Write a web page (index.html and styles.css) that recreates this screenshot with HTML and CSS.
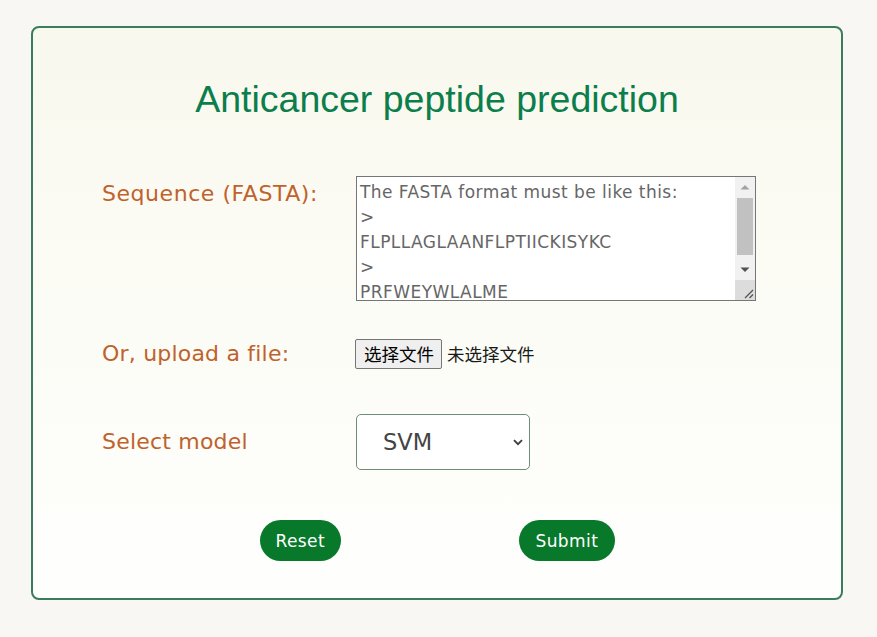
FILE: index.html
```html
<!DOCTYPE html>
<html lang="zh">
<head>
<meta charset="utf-8">
<title>Anticancer peptide prediction</title>
<link rel="stylesheet" href="styles.css">
</head>
<body>
<form class="card">
  <h1 class="title">Anticancer peptide prediction</h1>
  <div class="row row-seq">
    <label class="label" for="seq">Sequence (FASTA):</label>
    <div class="seq-box">
      <textarea id="seq" class="seq" spellcheck="false">The FASTA format must be like this:
&gt;
FLPLLAGLAANFLPTIICKISYKC
&gt;
PRFWEYWLALME
</textarea>
      <div class="sbar">
        <div class="sbar-btn">
          <svg width="10" height="6" viewBox="0 0 10 6"><path d="M0.5 5.5 L5 1 L9.5 5.5 Z" fill="#a3a3a3"/></svg>
        </div>
        <div class="sbar-track"><div class="sbar-thumb"></div></div>
        <div class="sbar-btn">
          <svg width="10" height="6" viewBox="0 0 10 6"><path d="M0.5 0.5 L5 5 L9.5 0.5 Z" fill="#505050"/></svg>
        </div>
        <div class="sbar-corner">
          <svg width="12" height="12" viewBox="0 0 12 12"><path d="M11 3 L3 11 M11 7.5 L7.5 11" stroke="#555" stroke-width="1.3" fill="none"/></svg>
        </div>
      </div>
    </div>
  </div>
  <div class="row row-file">
    <span class="label">Or, upload a file:</span>
    <div class="file">
      <label class="file-btn">选择文件<input type="file" class="file-input"></label>
      <span class="file-name">未选择文件</span>
    </div>
  </div>
  <div class="row row-model">
    <label class="label" for="model">Select model</label>
    <div class="select-wrap">
      <select id="model" class="select">
        <option>SVM</option>
        <option>RF</option>
        <option>KNN</option>
      </select>
      <svg class="chevron" width="10" height="7" viewBox="0 0 10 7"><path d="M1 1.2 L5 5.2 L9 1.2" fill="none" stroke="#3c3c3c" stroke-width="1.8"/></svg>
    </div>
  </div>
  <div class="actions">
    <button type="reset" class="btn">Reset</button>
    <button type="button" class="btn btn-submit">Submit</button>
  </div>
</form>
</body>
</html>
```
FILE: styles.css
```css
html, body {
  margin: 0;
  padding: 0;
}
body {
  background: #f8f7f4;
  padding: 26px 0 0 31px;
  font-family: "DejaVu Sans", Verdana, sans-serif;
}
.card {
  box-sizing: border-box;
  width: 812px;
  height: 574px;
  border: 2px solid #3a7d5c;
  border-radius: 8px;
  background: linear-gradient(to bottom, #f9f8ee 0%, #fcfcf6 50%, #fefefd 100%);
  padding: 50px 0 0 69px;
  display: flex;
  flex-direction: column;
}
.title {
  margin: 0 0 0 -69px;
  font-family: "Liberation Sans", Arial, sans-serif;
  font-size: 37.5px;
  line-height: 43px;
  font-weight: normal;
  color: #0b7e4c;
  text-align: center;
}
.row {
  display: flex;
  align-items: center;
}
.label {
  width: 254px;
  flex: none;
  font-size: 22px;
  letter-spacing: 0.2px;
  color: #c0622b;
  line-height: 26px;
}
.row-seq {
  align-items: flex-start;
  margin-top: 55px;
}
.row-seq .label {
  margin-top: 5px;
  letter-spacing: 0.55px;
}
.seq-box {
  box-sizing: border-box;
  width: 400px;
  height: 125px;
  border: 1px solid #767676;
  background: #fff;
  display: flex;
}
.seq {
  flex: 1;
  min-width: 0;
  box-sizing: border-box;
  height: 100%;
  margin: 0;
  padding: 3px 3px 0 3px;
  border: none;
  background: transparent;
  color: #666;
  font-family: "DejaVu Sans", Verdana, sans-serif;
  font-size: 17px;
  letter-spacing: 0.45px;
  line-height: 25px;
  resize: none;
  overflow: hidden;
  outline: none;
}
.sbar {
  width: 20px;
  flex: none;
  display: flex;
  flex-direction: column;
  background: #f1f1f1;
}
.sbar-btn {
  height: 20px;
  flex: none;
  display: flex;
  align-items: center;
  justify-content: center;
}
.sbar-track {
  flex: 1;
  padding: 1px 2px 0;
}
.sbar-thumb {
  height: 57px;
  background: #c1c1c1;
}
.sbar-corner {
  height: 20px;
  flex: none;
  background: #dcdcdc;
  display: flex;
  align-items: flex-end;
  justify-content: flex-end;
  padding: 0 1px 1px 0;
  box-sizing: border-box;
}
.row-file {
  margin-top: 38px;
}
.file {
  display: flex;
  align-items: center;
  gap: 5px;
  font-family: "Noto Sans CJK SC", "DejaVu Sans", sans-serif;
  font-size: 17.5px;
}
.file-btn {
  box-sizing: border-box;
  height: 30px;
  line-height: 28px;
  padding: 0 7px 0 8px;
  margin-left: -1px;
  border: 1px solid #767676;
  border-radius: 2px;
  background: #efefef;
  color: #000;
  cursor: pointer;
}
.file-input {
  display: none;
}
.file-name {
  color: #1a1a1a;
  line-height: 28px;
}
.row-model {
  margin-top: 45px;
}
.select-wrap {
  position: relative;
  width: 174px;
  height: 56px;
}
.select {
  box-sizing: border-box;
  width: 174px;
  height: 56px;
  margin: 0;
  padding: 0 0 0 26px;
  border: 1px solid #6f8d76;
  border-radius: 5px;
  background: #fff;
  color: #444;
  font-family: "DejaVu Sans", Verdana, sans-serif;
  font-size: 22.5px;
  -webkit-appearance: none;
  appearance: none;
  outline: none;
}
.chevron {
  position: absolute;
  right: 7px;
  top: 25px;
  pointer-events: none;
}
.actions {
  display: flex;
  margin-top: 50px;
  padding-left: 158px;
}
.btn {
  height: 41px;
  padding: 0 15.5px;
  border: none;
  border-radius: 21px;
  background: #08782a;
  color: #fff;
  font-family: "DejaVu Sans", Verdana, sans-serif;
  font-size: 17px;
  letter-spacing: 0.4px;
  cursor: pointer;
}
.btn-submit {
  margin-left: 178px;
  padding: 0 17px;
}
```
